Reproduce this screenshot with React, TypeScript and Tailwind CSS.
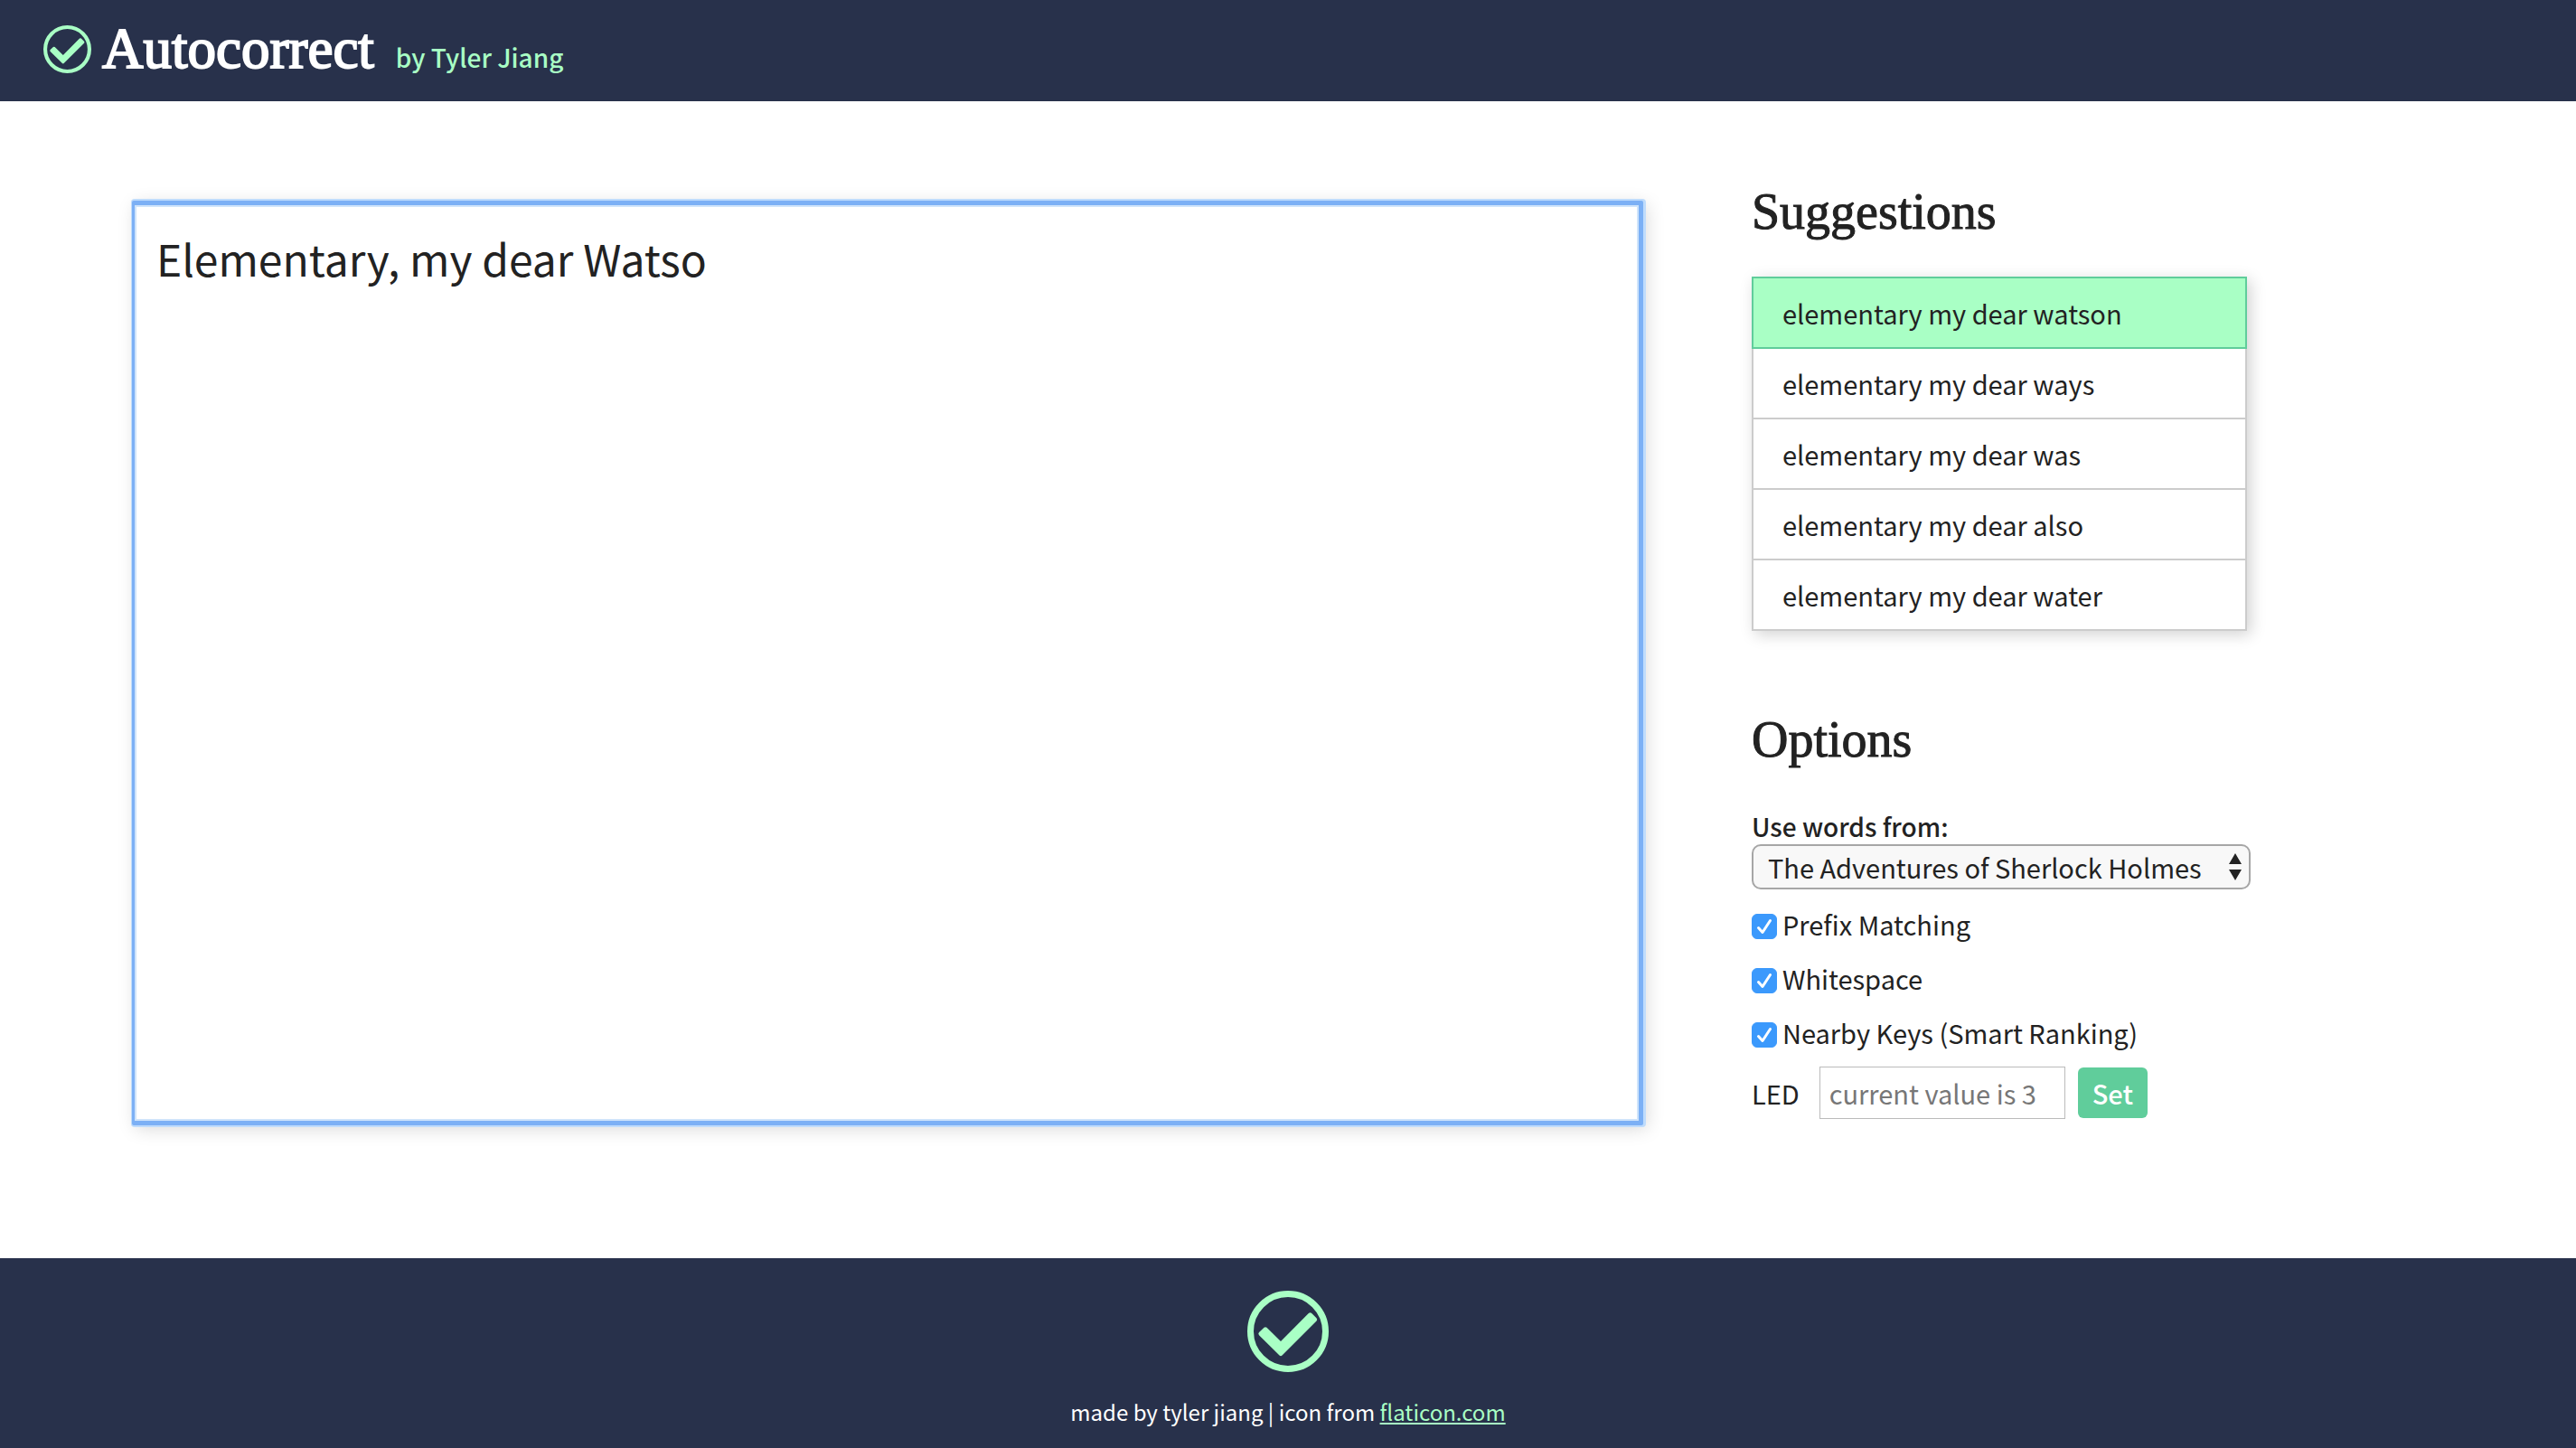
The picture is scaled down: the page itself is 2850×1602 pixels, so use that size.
import { useState } from "react";

const SUGGESTIONS = [
  "elementary my dear watson",
  "elementary my dear ways",
  "elementary my dear was",
  "elementary my dear also",
  "elementary my dear water",
];

const OPTIONS = ["Prefix Matching", "Whitespace", "Nearby Keys (Smart Ranking)"];

function CheckLogo({ className }: { className: string }) {
  return (
    <svg viewBox="0 0 90 90" className={className} aria-hidden="true">
      <circle cx="45" cy="45" r="41.5" fill="none" stroke="#a9ffc5" strokeWidth="7" />
      <path
        d="M13 46 18.500 40.800Q20 39.500 21.500 40.800L37 56 68 24.800Q69.500 23.500 71 24.800L76.500 30.300Q78 32 76.500 33.500L38.500 71.500Q37 72.800 35.500 71.500L13 49.200Q11.500 47.500 13 46Z"
        fill="#a9ffc5"
      />
    </svg>
  );
}

function Option({ label }: { label: string }) {
  const [on, setOn] = useState(true);
  return (
    <label className="flex h-15 items-center gap-1.5">
      <span className="mt-1.5 grid size-7">
        <input
          type="checkbox"
          checked={on}
          onChange={() => setOn(!on)}
          className="peer col-start-1 row-start-1 size-7 appearance-none rounded-md border border-gray-400 bg-white checked:border-[#3b99fc] checked:bg-[#3b99fc]"
        />
        <svg
          viewBox="0 0 28 28"
          className="pointer-events-none invisible col-start-1 row-start-1 size-7 peer-checked:visible"
          aria-hidden="true"
        >
          <path d="M7.500 15.500 12 20.500 20.500 7.500" fill="none" stroke="#fff" strokeWidth="3" strokeLinecap="round" strokeLinejoin="round" />
        </svg>
      </span>
      {label}
    </label>
  );
}

export default function App() {
  const [text, setText] = useState("Elementary, my dear Watso");
  return (
    <div className="flex min-h-screen flex-col bg-white font-['Noto_Sans_CJK_SC','Noto_Sans',sans-serif] text-[29px] leading-10 text-[#222]">
      <header className="flex h-28 items-center bg-[#28314b] pb-1 pl-12">
        <CheckLogo className="size-[53px]" />
        <div className="flex items-baseline gap-6 pl-3">
          <h1 className="font-['Liberation_Serif',serif] text-[63px] leading-16 text-white [-webkit-text-stroke:2px_white]">Autocorrect</h1>
          <p className="text-[28px] font-medium text-[#a9ffc5]">by Tyler Jiang</p>
        </div>
      </header>

      <main className="flex grow items-start gap-30 px-[5.12%] pt-20">
        <textarea
          aria-label="Text"
          value={text}
          onChange={(e) => setText(e.target.value)}
          className="mt-[30px] h-[1023px] w-[65.36%] resize-none rounded-xs border-[5px] border-l-[3px] border-[#7cb0f5] bg-white px-6 pt-[26px] text-[48px] leading-16 shadow-[inset_0_0_0_2px_#cfe4fb,1px_0_0_2px_#bfdcfc,4px_4px_20px_rgba(0,0,0,0.15)] outline-none"
        />
        <aside className="w-[552px] pt-1.5">
          <h2 className="font-['Liberation_Serif',serif] text-[56px] leading-18 [-webkit-text-stroke:1px_#222]">Suggestions</h2>
          <ul className="mr-1 mt-9 border-2 border-[#ccc] shadow-[4px_4px_16px_rgba(0,0,0,0.18)]">
            {SUGGESTIONS.map((s, i) => (
              <li
                key={s}
                className={
                  i === 0
                    ? "-mx-0.5 -mt-0.5 border-2 border-[#60cd9b] bg-[#a9ffc5] px-8 py-[18px]"
                    : "border-[#ccc] px-8 py-[18px] not-last:border-b-2"
                }
              >
                {s}
              </li>
            ))}
          </ul>
          <h2 className="mt-21 font-['Liberation_Serif',serif] text-[56px] leading-18 [-webkit-text-stroke:1px_#222]">Options</h2>
          <label htmlFor="source" className="mt-10 block text-[28px] font-medium">
            Use words from:
          </label>
          <div className="grid items-center">
            <select
              id="source"
              className="col-start-1 row-start-1 h-[50px] w-full appearance-none rounded-[10px] border-2 border-[#a6a6a6] bg-[#f8f8f8] pl-4"
            >
              <option>The Adventures of Sherlock Holmes</option>
            </select>
            <svg viewBox="0 0 14 30" className="pointer-events-none col-start-1 row-start-1 mr-2.5 h-[30px] w-3.5 justify-self-end" aria-hidden="true">
              <path d="M7 0 14 12H0ZM7 30 14 18H0Z" fill="#222" />
            </svg>
          </div>
          <div className="mt-2">
            {OPTIONS.map((o) => (
              <Option key={o} label={o} />
            ))}
          </div>
          <form className="mt-2 flex items-center" onSubmit={(e) => e.preventDefault()}>
            <label htmlFor="led">LED</label>
            <input
              id="led"
              placeholder="current value is 3"
              className="ml-5.5 h-[58px] w-68 border border-[#bbb] px-2.5 placeholder:text-[#777]"
            />
            <button className="ml-3.5 h-14 rounded-md bg-[#60cd9b] px-4 font-medium text-white">Set</button>
          </form>
        </aside>
      </main>

      <footer className="flex flex-col items-center gap-6 bg-[#28314b] pb-5 pt-9 text-[24px] text-white">
        <CheckLogo className="size-[90px]" />
        <p>
          made by tyler jiang | icon from{" "}
          <a href="#flaticon" className="text-[#a9ffc5] underline">
            flaticon.com
          </a>
        </p>
      </footer>
    </div>
  );
}
